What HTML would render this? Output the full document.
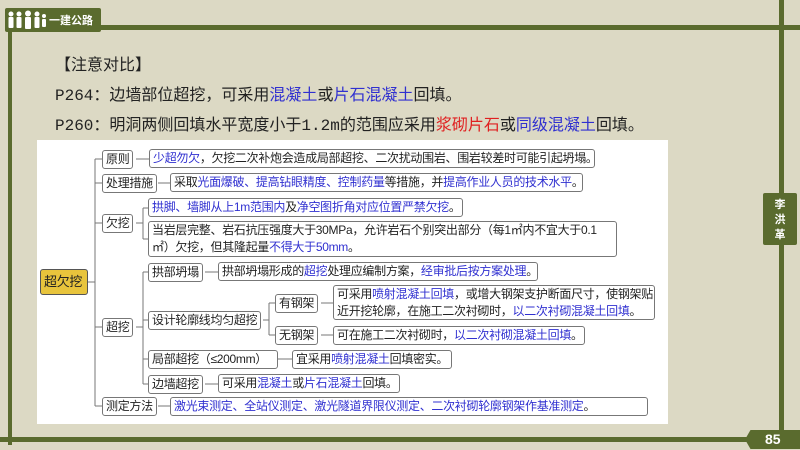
<!DOCTYPE html>
<html><head><meta charset="utf-8"><style>
*{margin:0;padding:0;box-sizing:border-box}
body{width:800px;height:450px;background:#dcd9c4;position:relative;overflow:hidden;font-family:"Liberation Sans","Noto Sans CJK SC",sans-serif}
.a{position:absolute}
.g{background:#5a6b2e}
.n{position:absolute;border:1px solid #777;border-radius:3px;background:#fff;font-size:12px;line-height:17px;padding:0 3px;color:#222;white-space:nowrap;letter-spacing:-0.3px;overflow:hidden}
.b{color:#3030d0}
.t{position:absolute;left:55px;font-size:16px;color:#222;font-family:"Liberation Mono","Noto Sans CJK SC",monospace;white-space:nowrap}
.r{color:#e02020}
</style></head><body>
<div class="a g" style="left:5px;top:8px;width:96px;height:24px;border-radius:2px"></div>
<svg class="a" style="left:7px;top:10px" width="40" height="20" fill="#fff">
<circle cx="4" cy="4" r="2.5"/><rect x="1.5" y="7" width="5" height="11" rx="1"/>
<circle cx="12" cy="4" r="2.5"/><rect x="9.5" y="7" width="5" height="11" rx="1"/>
<circle cx="21" cy="3.5" r="3"/><rect x="18" y="7" width="6" height="12" rx="1"/>
<circle cx="30" cy="4" r="2.5"/><rect x="27.5" y="7" width="5" height="11" rx="1"/>
<circle cx="37" cy="6" r="2"/><rect x="35" y="9" width="4" height="8" rx="1"/>
</svg>
<div class="a" style="left:49px;top:12px;color:#fff;font-size:11px;font-weight:bold">一建公路</div>
<div class="a g" style="left:100px;top:25px;width:700px;height:5px"></div>
<div class="a g" style="left:8px;top:30px;width:4px;height:415px"></div>
<div class="a g" style="left:779px;top:0;width:5px;height:440px"></div>
<div class="a g" style="left:763px;top:193px;width:34px;height:52px;border-radius:2px"></div>
<div class="a" style="left:763px;top:198px;width:34px;color:#fff;font-size:11px;font-weight:bold;text-align:center;line-height:15px">李<br>洪<br>革</div>
<div class="a g" style="left:0;top:437px;width:750px;height:5px"></div>
<div class="a g" style="left:745px;top:430px;width:55px;height:19px;clip-path:polygon(10% 0,100% 0,100% 100%,10% 100%,0 50%)"></div>
<div class="a" style="left:765px;top:431px;color:#fff;font-size:14px;font-weight:bold">85</div>

<div class="t" style="top:51px">【注意对比】</div>
<div class="t" style="top:81px">P264：边墙部位超挖，可采用<span class="b">混凝土</span>或<span class="b">片石混凝土</span>回填。</div>
<div class="t" style="top:111px">P260：明洞两侧回填水平宽度小于1.2m的范围应采用<span class="r">浆砌片石</span>或<span class="b">同级混凝土</span>回填。</div>

<div class="a" style="left:37px;top:140px;width:631px;height:284px;background:#fff"></div>
<svg class="a" style="left:0;top:0" width="800" height="450" fill="none" stroke="#777" stroke-width="1">
<path d="M88 282H95M95 159V406M95 159H102M95 183H102M95 223H102M95 327H102M95 406H102"/>
<path d="M136 159H149M158 183H170M136 223H143M143 208V239M143 208H148M143 239H148"/>
<path d="M136 327H143M143 272V384M143 272H148M143 320H148M143 359H148M143 384H148"/>
<path d="M205 272H218M263 320H269M269 303V335M269 303H275M269 335H275M321 303H333M321 335H333M278 359H292M205 384H218M158 406H170"/>
</svg>
<div class="n" style="left:40px;top:269px;width:48px;height:26px;line-height:24px;background:#e8c43c;border-color:#555;font-size:13px">超欠挖</div>
<div class="n" style="left:102px;top:150px">原则</div>
<div class="n" style="left:149px;top:149px;width:446px"><span class="b">少超勿欠</span>，欠挖二次补炮会造成局部超挖、二次扰动围岩、围岩较差时可能引起坍塌。</div>
<div class="n" style="left:102px;top:174px">处理措施</div>
<div class="n" style="left:170px;top:173px;width:413px">采取<span class="b">光面爆破、提高钻眼精度、控制药量</span>等措施，并<span class="b">提高作业人员的技术水平</span>。</div>
<div class="n" style="left:102px;top:214px">欠挖</div>
<div class="n" style="left:148px;top:198px;width:315px"><span class="b">拱脚、墙脚从上1m范围内</span>及<span class="b">净空图折角对应位置严禁欠挖</span>。</div>
<div class="n" style="left:148px;top:221px;width:469px;height:36px">当岩层完整、岩石抗压强度大于30MPa，允许岩石个别突出部分（每1㎡内不宜大于0.1<br>㎡）欠挖，但其隆起量<span class="b">不得大于50mm</span>。</div>
<div class="n" style="left:148px;top:263px">拱部坍塌</div>
<div class="n" style="left:218px;top:262px;width:320px">拱部坍塌形成的<span class="b">超挖</span>处理应编制方案，<span class="b">经审批后按方案处理</span>。</div>
<div class="n" style="left:102px;top:318px">超挖</div>
<div class="n" style="left:148px;top:311px">设计轮廓线均匀超挖</div>
<div class="n" style="left:275px;top:294px">有钢架</div>
<div class="n" style="left:333px;top:285px;width:322px;height:35px">可采用<span class="b">喷射混凝土回填</span>，或增大钢架支护断面尺寸，使钢架贴<br>近开挖轮廓，在施工二次衬砌时，<span class="b">以二次衬砌混凝土回填</span>。</div>
<div class="n" style="left:275px;top:326px">无钢架</div>
<div class="n" style="left:333px;top:326px;width:252px">可在施工二次衬砌时，<span class="b">以二次衬砌混凝土回填</span>。</div>
<div class="n" style="left:148px;top:350px;width:130px">局部超挖（≤200mm）</div>
<div class="n" style="left:292px;top:350px;width:160px">宜采用<span class="b">喷射混凝土</span>回填密实。</div>
<div class="n" style="left:148px;top:375px">边墙超挖</div>
<div class="n" style="left:218px;top:374px;width:182px">可采用<span class="b">混凝土</span>或<span class="b">片石混凝土</span>回填。</div>
<div class="n" style="left:102px;top:397px">测定方法</div>
<div class="n" style="left:170px;top:397px;width:478px"><span class="b">激光束测定、全站仪测定、激光隧道界限仪测定、二次衬砌轮廓钢架作基准测定</span>。</div>
</body></html>
